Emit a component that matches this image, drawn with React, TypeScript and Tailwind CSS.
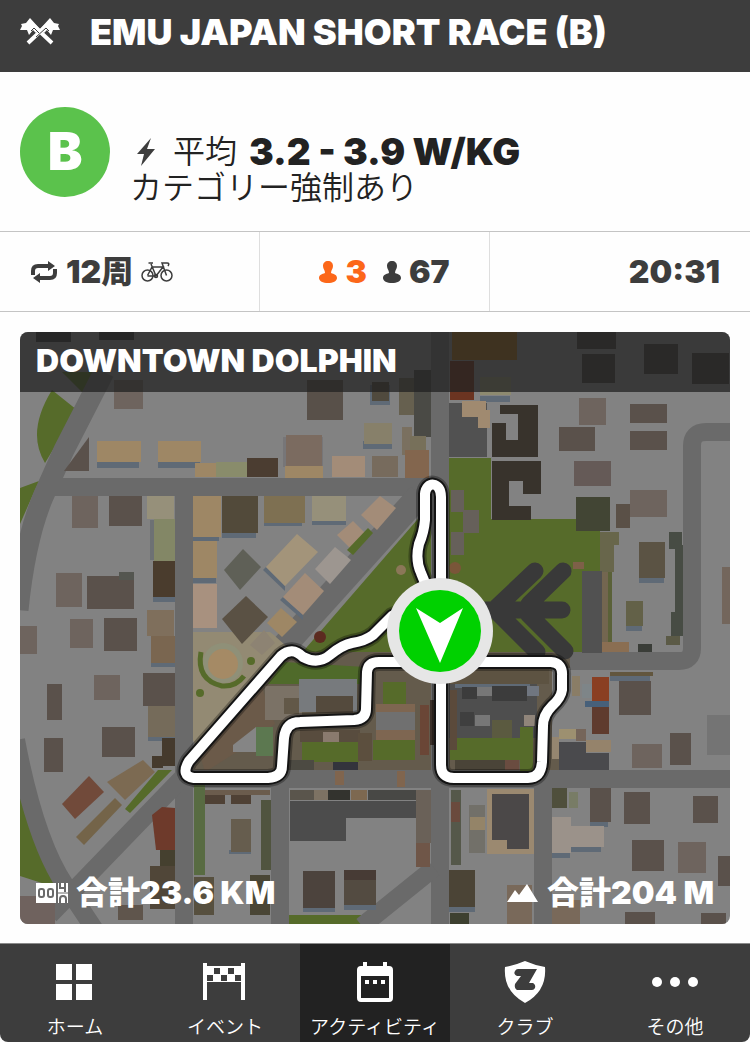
import type { ReactNode } from "react";

type Block = [x: number, y: number, w: number, h: number, fill: string];

const DARK = "#5a514b";
const LIGHT = "#6e645e";
const TAN = "#9e8765";
const PINK = "#a38c78";
const GRASS = "#566b2a";
const ROAD = "#6a6a6a";
const SHADE = "#5f6a76";

const BLOCKS: Block[] = [
  // north
  [36, 332, 35, 10, "#383838"], [99, 332, 35, 8, "#383838"], [114, 380, 29, 29, LIGHT],
  [97, 461, 42, 7, SHADE], [97, 441, 44, 21, TAN], [158, 461, 42, 7, SHADE], [158, 441, 43, 21, TAN],
  [195, 463, 21, 14, TAN], [216, 462, 31, 15, "#898c6b"], [247, 458, 31, 19, "#4b3d31"],
  [307, 380, 36, 40, "#585049"], [370, 385, 20, 20, SHADE], [372, 382, 17, 19, "#504a3e"],
  [363, 441, 29, 8, SHADE], [364, 423, 28, 21, "#87806a"], [399, 378, 15, 37, "#66604f"], [414, 370, 17, 67, "#4a4a45"],
  [283, 437, 40, 30, "#777678"], [286, 435, 36, 31, "#7b6b60"], [285, 466, 38, 12, TAN],
  [332, 456, 33, 21, PINK], [372, 456, 26, 21, "#776b5d"], [402, 427, 10, 28, "#7a7060"], [410, 436, 16, 16, "#77705a"], [405, 450, 24, 28, "#83664e"],
  [449, 403, 38, 54, "#515151"], [452, 332, 65, 28, "#94641f"], [450, 361, 24, 39, "#6b3421"], [480, 377, 31, 18, "#8d8a70"], [480, 396, 30, 6, SHADE],
  [462, 401, 24, 16, "#a08a70"], [478, 410, 12, 18, "#a08a70"],
  [577, 332, 39, 17, "#46413d"], [582, 354, 33, 29, "#46413d"], [644, 344, 34, 30, "#46413d"], [692, 353, 37, 31, "#46413d"],
  [579, 398, 27, 27, LIGHT], [559, 427, 36, 24, DARK], [630, 404, 37, 19, DARK], [630, 431, 37, 19, DARK],
  [574, 461, 37, 25, "#655a57"], [630, 490, 37, 27, LIGHT],
  // west
  [72, 496, 26, 32, LIGHT], [109, 496, 33, 30, DARK], [147, 496, 27, 23, "#96907a"], [154, 519, 21, 42, "#838766"],
  [150, 520, 4, 40, "#6d7174"], [153, 597, 22, 5, SHADE], [153, 561, 22, 36, "#4a3c2d"],
  [147, 610, 27, 26, "#7f6f5c"], [151, 662, 24, 5, SHADE], [151, 636, 24, 27, "#7a6650"],
  [193, 496, 28, 41, TAN], [193, 537, 26, 4, SHADE], [222, 532, 34, 6, SHADE], [222, 496, 36, 37, "#524a3a"],
  [193, 541, 24, 37, TAN], [193, 578, 23, 5, SHADE], [193, 584, 24, 44, "#a8917f"],
  [264, 522, 38, 4, SHADE], [264, 496, 41, 27, "#7e7052"], [312, 520, 34, 5, SHADE], [312, 496, 34, 25, "#96907a"],
  [56, 573, 26, 34, LIGHT], [87, 576, 47, 33, DARK], [119, 572, 15, 8, "#545650"], [70, 619, 23, 29, LIGHT], [104, 618, 33, 33, DARK], [20, 626, 17, 28, LIGHT],
  [47, 684, 15, 36, DARK], [94, 675, 26, 25, LIGHT], [143, 673, 32, 33, DARK], [148, 736, 27, 5, SHADE], [148, 706, 27, 31, "#756b5a"],
  [44, 738, 19, 34, DARK], [102, 727, 33, 30, DARK], [162, 738, 13, 28, "#453a2d"], [152, 756, 11, 12, "#453a2d"],
  [160, 850, 15, 16, "#45402f"], [150, 866, 25, 43, "#504638"], [20, 896, 35, 28, "#6f625e"], [118, 905, 25, 15, "#5f554c"],
  [194, 785, 11, 90, "#586b42"], [205, 790, 65, 5, "#6b5c4d"], [205, 795, 20, 9, "#4f4135"], [231, 795, 20, 9, "#4f4135"], [229, 850, 22, 4, SHADE], [231, 819, 20, 33, "#665d4e"],
  [194, 877, 20, 38, "#57503f"], [250, 875, 20, 40, "#4a4636"], [261, 800, 10, 70, "#50543f"],
  // park and pitch
  [576, 497, 34, 34, "#424534"], [616, 504, 14, 24, "#5a5047"], [451, 490, 13, 22, "#66605a"], [463, 510, 16, 23, "#66605a"], [451, 532, 13, 23, "#66605a"],
  [573, 562, 11, 7, "#7e6048"], [600, 532, 19, 13, "#68664b"], [600, 545, 14, 27, "#68664b"], [602, 572, 10, 70, "#736650"], [608, 572, 4, 70, "#5a6138"], [582, 571, 20, 82, "#515151"],
  [602, 642, 27, 10, "#8a6e52"], [638, 644, 14, 8, "#3a3d38"], [639, 578, 25, 5, SHADE], [639, 542, 26, 36, "#5b5344"], [626, 626, 16, 5, SHADE], [626, 601, 17, 25, "#636148"],
  [669, 532, 13, 17, "#474c44"], [675, 545, 8, 70, "#474c44"], [671, 612, 12, 24, "#474c44"], [666, 636, 14, 9, "#5b5a46"], [722, 567, 8, 57, "#73665c"],
  // centre
  [265, 686, 37, 34, "#7b7266"], [299, 679, 58, 33, "#777a7d"], [316, 696, 37, 17, "#544a3d"], [284, 698, 15, 16, "#625848"], [300, 730, 60, 12, "#584c3e"],
  [383, 682, 23, 24, GRASS], [376, 704, 39, 36, "#7e6651"], [376, 712, 39, 18, "#707070"], [420, 705, 9, 50, "#6a4636"], [430, 700, 6, 45, "#3b3029"],
  [302, 742, 57, 20, GRASS], [373, 740, 42, 20, GRASS], [358, 733, 14, 28, "#5c4f3e"], [323, 732, 16, 10, "#8a7a6e"],
  [256, 727, 17, 29, "#5c7850"], [288, 760, 26, 10, "#4c4a42"], [333, 762, 25, 8, "#33343c"],
  [335, 771, 9, 14, "#80654e"], [397, 771, 8, 16, "#80654e"],
  [449, 668, 100, 16, "#5d5342"], [449, 684, 88, 54, "#4e4e4e"], [455, 684, 75, 4, SHADE], [462, 687, 15, 12, "#3c3c3c"], [477, 687, 15, 9, "#777"], [492, 686, 35, 15, "#3c3c3c"],
  [527, 686, 12, 10, "#707680"], [475, 715, 15, 11, "#777"], [460, 712, 14, 14, "#3f3f3f"], [492, 720, 20, 18, "#5b5a40"], [524, 715, 11, 11, "#90857a"],
  [450, 738, 82, 22, GRASS], [520, 727, 13, 44, GRASS], [455, 760, 64, 10, "#4a4438"], [505, 760, 14, 10, "#6a4c40"], [450, 690, 7, 60, "#5b4a3b"],
  // south
  [290, 790, 24, 10, "#5a554c"], [314, 790, 14, 10, "#7d7263"], [328, 790, 22, 10, "#33332e"], [351, 790, 16, 10, "#7d6850"], [368, 790, 48, 10, "#484845"],
  [416, 790, 15, 53, "#6a6158"], [416, 843, 14, 24, "#6f5648"], [303, 907, 32, 5, SHADE], [303, 871, 32, 37, "#4c433d"], [344, 905, 32, 5, SHADE], [344, 870, 32, 35, "#534b41"], [344, 870, 32, 10, "#473b35"],
  [449, 907, 26, 5, SHADE], [449, 870, 26, 37, "#4b4436"], [450, 913, 19, 11, "#3d4030"], [451, 790, 10, 75, "#55584a"], [451, 802, 9, 20, "#6a4a3d"], [469, 805, 16, 48, "#727069"], [470, 817, 15, 13, "#948468"],
  [487, 789, 47, 65, "#9b8970"], [492, 794, 37, 46, "#4b4848"], [507, 838, 22, 11, "#4b4848"],
  [507, 885, 25, 39, "#79695a"], [552, 900, 28, 24, "#79695a"],
  // south east
  [592, 677, 17, 25, "#8a3f22"], [585, 701, 24, 6, "#47607a"], [592, 707, 17, 27, "#5f3b2e"], [582, 684, 10, 14, "#7e8588"], [572, 676, 8, 20, "#8a7d66"],
  [559, 729, 17, 10, "#9d9070"], [576, 729, 10, 12, "#75655a"], [552, 737, 7, 22, "#958670"], [586, 740, 25, 12, "#95836b"],
  [559, 742, 27, 28, "#4a4a4d"], [586, 753, 23, 17, "#4a4a4d"], [610, 672, 43, 4, "#62563e"], [610, 676, 40, 5, SHADE],
  [619, 681, 32, 34, DARK], [632, 744, 30, 24, LIGHT], [670, 733, 21, 32, DARK], [707, 715, 23, 40, "#747474"],
  [590, 822, 18, 5, SHADE], [590, 788, 21, 34, DARK], [624, 792, 26, 32, DARK], [693, 796, 25, 27, DARK], [632, 840, 32, 31, DARK], [678, 842, 28, 31, LIGHT],
  [718, 856, 12, 30, DARK], [625, 912, 30, 12, DARK], [701, 913, 25, 11, DARK], [552, 788, 15, 20, "#4f4f3c"], [569, 792, 9, 16, "#787c66"],
  [552, 853, 18, 5, SHADE], [552, 817, 19, 36, "#9b928a"], [571, 847, 30, 5, SHADE], [571, 826, 33, 21, "#9b928a"],
];

const LOTS: [points: string, fill: string][] = [
  ["89,437 89,471 64,471", DARK],
  ["243,549 261,567 240,590 224,570", "#5f6057"],
  ["246,596 268,617 242,644 222,619", "#5a5144"],
  ["380,496 396,508 377,530 361,515", PINK],
  ["353,521 365,533 350,548 337,535", PINK],
  ["368,528 373,533 353,555 347,550", GRASS],
  ["266,567 285,586 285,591 263,570", SHADE],
  ["297,534 318,552 285,586 266,567", "#a3947a"],
  ["335,547 351,560 330,584 315,569", "#9d9690"],
  ["283,597 303,615 303,620 280,600", SHADE],
  ["305,573 324,591 303,615 283,597", PINK],
  ["281,608 297,622 282,637 267,623", TAN],
  ["264,630 275,643 262,655 250,645", "#8d8373"],
  ["89,776 104,792 75,819 62,804", "#714a3a"],
  ["143,760 155,772 125,800 107,782", "#7c6a52"],
  ["115,798 122,805 84,845 76,837", "#746449"],
  ["158,770 172,770 130,813 125,809", GRASS],
  ["152,815 162,807 175,808 175,850 156,850", "#6e3a2b"],
  ["500,405 538,405 538,457 492,457 492,423 506,423 506,440 518,440 518,414 500,414", "#38332c"],
  ["492,461 541,461 541,494 523,494 523,481 509,481 509,506 531,506 531,520 492,520", "#38332c"],
  ["290,801 416,801 416,818 346,818 346,841 290,841", "#4c4c4c"],
];

const ROUTE =
  "M441 630V497C441 481 426 481 425 494L425 520Q424 532 419 544Q415 560 421 573L432 600L392 616L373 635Q365 641 352 643Q342 645 330 655Q318 665 303 657Q292 646 281 656L189 761Q180 776 194 778H268Q282 777 282 766L284 738Q286 722 300 722L354 720Q366 719 366 709L367 672Q368 662 379 662H551Q563 663 562 676V690Q561 698 552 706Q543 715 543 726L542 762Q541 778 528 778H454Q441 778 441 765Z";

function CourseMap() {
  return (
    <svg viewBox="20 332 710 592" className="block w-full" role="img" aria-label="Downtown Dolphin">
      <rect x="20" y="332" width="710" height="592" fill="#828282" />
      <path d="M52 390Q26 432 45 463L77 410Z M20 488L39 481L20 524Z M62 372L105 372L86 396Z M20 793L62 887L45 884L20 876Z" fill={GRASS} />
      <path d="M449 458H491V519H600V655H300L430 505H449Z M288 915H361V924H288Z" fill={GRASS} />
      <path d="M193 632H270L300 655L200 755L193 740Z" fill="#938a73" />
      <path d="M292 652H571V770H190V765Z" fill="#645b4c" />
      <path d="M284 662L365 667V684H268Z" fill="#4f6a2a" />
      <path d="M200 755L262 688L275 724L240 750L205 772Z" fill="#6b5a49" />
      <path d="M233 745L256 727H258V752H233Z" fill="#858585" />
      <path d="M552 668H610V742H552Z" fill="#828282" />
      <g fill="none" stroke={ROAD} strokeWidth="18">
        <path d="M104 372L64 450L43 497Q25 540 18 610" strokeWidth="21" />
        <path d="M40 487H449M184 490V924M440 332V924M190 779H730M280 785V924M543 785V924" />
        <path d="M730 432H706Q692 432 692 446V648Q692 661 679 661H570" />
        <path d="M16 740Q35 840 65 885L95 930M185 775L50 915M434 868L362 926" />
        <path d="M420 495L285 645" strokeWidth="25" />
      </g>
      {BLOCKS.map(([x, y, w, h, fill], i) => (
        <rect key={i} x={x} y={y} width={w} height={h} fill={fill} />
      ))}
      {LOTS.map(([points, fill], i) => (
        <polygon key={i} points={points} fill={fill} />
      ))}
      <g>
        <circle cx="223" cy="663" r="20" fill="#8f9078" />
        <path d="M201 652Q196 680 222 686Q236 687 244 676" fill="none" stroke="#566b2a" strokeWidth="5" />
        <circle cx="223" cy="664" r="15" fill="#a58a65" />
        <circle cx="251" cy="661" r="4" fill={GRASS} />
        <circle cx="200" cy="693" r="4" fill={GRASS} />
        <circle cx="320" cy="637" r="6" fill="#5c2b20" />
        <circle cx="401" cy="570" r="5" fill="#8b7758" />
        <circle cx="455" cy="568" r="6" fill="#7a5639" />
      </g>
      <path d="M485 610H562M497 607L535 571M529 604L563 571M496 611L537 652M528 614L565 651" fill="none" stroke="#393939" strokeWidth="17" strokeLinecap="round" />
      <g fill="none" strokeLinejoin="round">
        <path d={ROUTE} stroke="#000" strokeOpacity=".3" strokeWidth="18" />
        <path d={ROUTE} stroke="#141414" strokeWidth="14" />
        <path d={ROUTE} stroke="#fff" strokeWidth="10" />
      </g>
      <circle cx="440" cy="631" r="53" fill="#e6e6e6" />
      <circle cx="440" cy="631" r="41" fill="#00d100" />
      <path d="M416 608L440 623L463 608L440 663Z" fill="#fff" />
    </svg>
  );
}

function FlagsIcon() {
  return (
    <svg viewBox="0 0 40 28" className="w-10 shrink-0" fill="#fff" aria-hidden="true">
      <path d="M10 0L20 11L16 15L13 12L9 17L7 12L0 12L2 8L1 6L6 5Z" />
      <path d="M30 0L20 11L24 15L27 12L31 17L33 12L40 12L38 8L39 6L34 5Z" />
      <path d="M14 8L32 25M26 8L8 25" stroke="#fff" strokeWidth="4" />
      <path d="M11 13L14 10L19 15M29 13L26 10L16 19" fill="none" stroke="#3d3d3d" strokeWidth="1" />
    </svg>
  );
}

function RepeatIcon() {
  return (
    <svg viewBox="0 0 28 24" className="w-7" fill="none" stroke="#3d3d3d" strokeWidth="4" aria-hidden="true">
      <path d="M3 15V11Q3 6 8 6H19M25 9V13Q25 18 20 18H9" />
      <path d="M18 1L25 6L18 11ZM10 13L3 18L10 23Z" fill="#3d3d3d" stroke="none" />
    </svg>
  );
}

function BikeIcon() {
  return (
    <svg viewBox="0 0 32 22" className="w-8" fill="none" stroke="#3d3d3d" strokeWidth="1.5" aria-hidden="true">
      <circle cx="6.5" cy="14.5" r="5.5" />
      <circle cx="25.5" cy="14.5" r="5.5" />
      <path d="M6.5 14.5L11 6H22L15 15H6.5M15 15L10 3M7.5 2H12M25.5 14.5L21 2H26Q29 2 27 5" />
      <circle cx="15" cy="15" r="1.5" />
    </svg>
  );
}

function PersonIcon() {
  return (
    <svg viewBox="0 0 18 22" className="w-[18px]" fill="currentColor" aria-hidden="true">
      <path d="M9 0C12 0 14 2 14 5C14 8 12 9 12 12C15 13 18 14 18 17C18 20 14 22 9 22C4 22 0 20 0 17C0 14 3 13 6 12C6 9 4 8 4 5C4 2 6 0 9 0Z" />
    </svg>
  );
}

function OdometerIcon() {
  return (
    <svg viewBox="0 0 32 20" className="w-8" aria-hidden="true">
      <path d="M0 0H32V20H0Z" fill="#fff" />
      <g fill="none" stroke="#6a6a6a" strokeWidth="2">
        <rect x="3" y="6" width="5" height="8" rx="2" />
        <rect x="12" y="6" width="5" height="8" rx="2" />
        <path d="M21 0V20M24 0V5H29M29 0V9M24 20V16Q24 13 27 13Q30 13 30 16V20" />
        <path d="M20 10H32" strokeWidth="1" />
      </g>
    </svg>
  );
}

const NAV: { label: string; icon: ReactNode; active?: boolean }[] = [
  { label: "ホーム", icon: <path d="M1 4H17V20H1ZM21 4H37V20H21ZM1 24H17V40H1ZM21 24H37V40H21Z" /> },
  {
    label: "イベント",
    icon: (
      <>
        <path d="M-2 3H2V40H-2ZM36 3H40V40H36ZM2 6H36V22H2Z" />
        <path d="M9 8H15V14H9ZM23 8H29V14H23ZM2 15H8V21H2ZM16 15H22V21H16ZM30 15H36V21H30Z" fill="#3d3d3d" />
      </>
    ),
  },
  {
    label: "アクティビティ",
    active: true,
    icon: (
      <>
        <path d="M8 2H12V6H28V2H32V6H34Q38 6 38 10V38Q38 42 34 42H6Q2 42 2 38V10Q2 6 6 6H8Z" />
        <path d="M6 16H34V38H6Z" fill="#222" />
        <path d="M10 20H14V24H10ZM18 20H22V24H18ZM26 20H30V24H26Z" />
      </>
    ),
  },
  {
    label: "クラブ",
    icon: (
      <>
        <path d="M20 1Q29 5 40 7Q42 31 20 43Q-2 31 0 7Q11 5 20 1Z" />
        <path d="M13 9H32L24 23H28Q31 25 30 28Q29 30 27 30H12Q9 28 10 24L16 16H12Q8 14 10 11Q11 9 13 9Z" fill="#3d3d3d" />
      </>
    ),
  },
  {
    label: "その他",
    icon: (
      <>
        <circle cx="2" cy="22" r="5" />
        <circle cx="20" cy="22" r="5" />
        <circle cx="38" cy="22" r="5" />
      </>
    ),
  },
];

export default function App() {
  return (
    <div className="flex min-h-screen flex-col bg-[#fefefe] font-['Inter','Noto_Sans_CJK_JP',sans-serif] text-[#222]">
      <header className="flex h-[72px] items-center gap-[30px] bg-[#3d3d3d] px-5 pb-2 text-white">
        <FlagsIcon />
        <h1 className="text-[36px] leading-10 font-black whitespace-nowrap">EMU JAPAN SHORT RACE (B)</h1>
      </header>

      <section className="flex items-start gap-6 px-5 pt-[35px] pb-[25px]">
        <span className="grid size-[90px] shrink-0 place-items-center rounded-full bg-[#5bc24c] text-[52px] leading-none font-black text-white">B</span>
        <div className="pt-[27px]">
          <p className="flex h-9 items-center">
            <svg viewBox="0 0 18 28" className="mr-1 ml-[3px] w-[18px]" fill="#3d3d3d" aria-hidden="true">
              <path d="M14 0L0 16H7L4 28L18 11H10Z" />
            </svg>
            <span className="mr-3 ml-[14px] text-[32px] font-[350]">平均</span>
            <strong className="text-[37px] font-black whitespace-nowrap">3.2 - 3.9 W/KG</strong>
          </p>
          <p className="-ml-1 text-[32px] leading-9 font-[350]">カテゴリー強制あり</p>
        </div>
      </section>

      <section className="grid h-[81px] grid-cols-[26fr_23fr_26fr] border-y border-[#c4c4c4] text-[32px] leading-10 font-black text-[#3d3d3d]">
        <div className="flex items-center gap-2 border-r border-[#dedede] pl-[30px]">
          <RepeatIcon />
          <span>12周</span>
          <BikeIcon />
        </div>
        <div className="flex items-center justify-center gap-4 border-r border-[#dedede] pl-5">
          <span className="flex items-center gap-2 text-[#fc6719]"><PersonIcon />3</span>
          <span className="flex items-center gap-2"><PersonIcon />67</span>
        </div>
        <div className="flex items-center justify-end pr-[30px]">20:31</div>
      </section>

      <section className="relative mx-5 mt-5 mb-[19px] overflow-hidden rounded-lg text-[32px] font-black text-white">
        <CourseMap />
        <h2 className="absolute inset-x-0 top-0 h-[60px] bg-[#222]/75 px-4 leading-[58px]">DOWNTOWN DOLPHIN</h2>
        <div className="absolute inset-x-0 bottom-2 flex justify-between px-4 leading-[46px]">
          <span className="flex items-center gap-2"><OdometerIcon />合計23.6 KM</span>
          <span className="flex items-center gap-2">
            <svg viewBox="0 0 32 20" className="w-8" fill="#fff" aria-hidden="true">
              <path d="M0 19L8 7L12 12L20 1L31 19Z" />
            </svg>
            合計204 M
          </span>
        </div>
      </section>

      <nav className="mt-auto grid h-[99px] grid-cols-5 overflow-hidden rounded-b-lg border-t border-[#8a8a8a] bg-[#3d3d3d] text-white">
        {NAV.map(({ label, icon, active }) => (
          <a
            key={label}
            href="#"
            aria-current={active ? "page" : undefined}
            className={`flex flex-col items-center gap-1.5 pt-4 ${active ? "bg-[#222]" : ""}`}
          >
            <svg viewBox="-4 0 48 44" className="h-11 w-12" fill="#fff" aria-hidden="true">{icon}</svg>
            <span className="text-[19px] leading-9 font-[350] whitespace-nowrap">{label}</span>
          </a>
        ))}
      </nav>
    </div>
  );
}
